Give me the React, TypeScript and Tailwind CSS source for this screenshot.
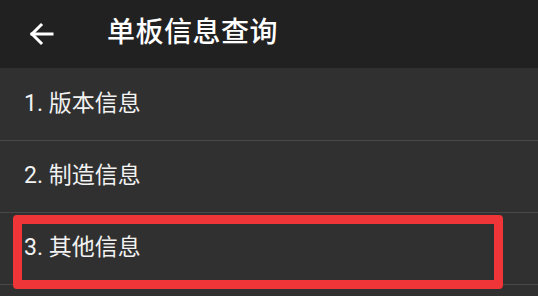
import type { ReactNode } from "react";

const font = { fontFamily: '"Roboto", "Noto Sans CJK SC", sans-serif' };

const items = ["1. 版本信息", "2. 制造信息", "3. 其他信息"];

function Row({ children }: { children: ReactNode }) {
  return (
    <div className="flex h-[72px] items-center border-b border-[#474747] pl-[24px] text-[23px] text-[#f2f2f2]">
      {children}
    </div>
  );
}

export default function App() {
  return (
    <div className="relative h-[296px] w-[538px] overflow-hidden bg-[#303030]" style={font}>
      <header className="flex h-[68px] items-center bg-[#212121]">
        <span className="ml-[28px] text-white">
          <svg width="28" height="28" viewBox="0 0 28 28" fill="none" stroke="currentColor" strokeWidth="3" strokeLinecap="square">
            <path d="M4 14h20" />
            <path d="M13 5l-9 9 9 9" />
          </svg>
        </span>
        <h1 className="ml-[51px] pb-[2px] text-[28px] font-medium tracking-[0.5px] text-white">单板信息查询</h1>
      </header>
      <div className="pt-px">
        {items.map((t) => (
          <Row key={t}>{t}</Row>
        ))}
      </div>
      <div className="absolute left-[13px] top-[215px] h-[74px] w-[490px] rounded-[4px] border-[9px] border-[#f03538]" />
    </div>
  );
}
